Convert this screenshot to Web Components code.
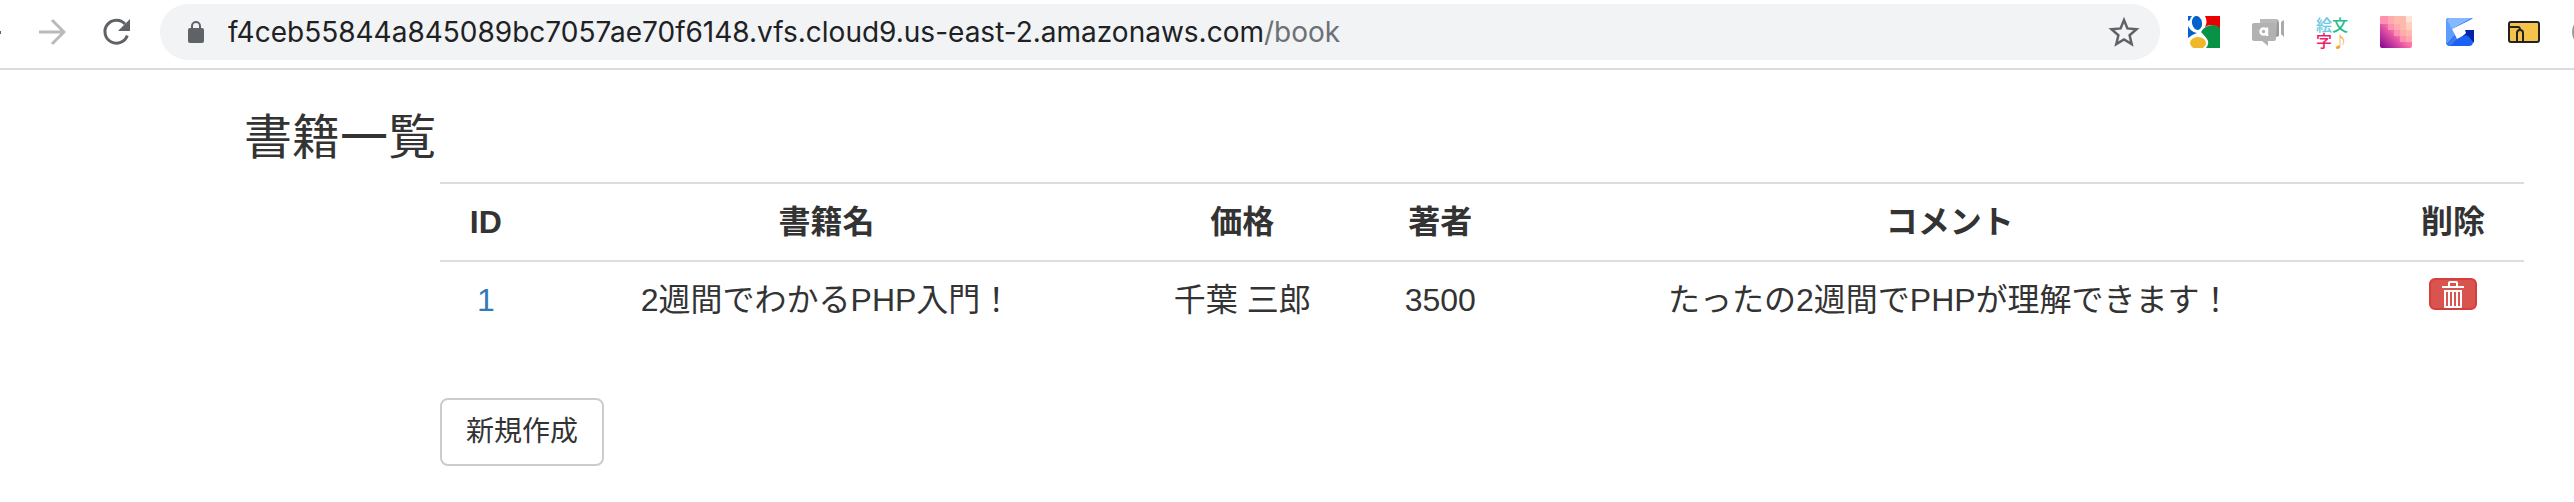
<!DOCTYPE html>
<html lang="ja">
<head>
<meta charset="utf-8">
<title>書籍一覧</title>
<style>
body { margin: 0; background: #fff; color: #333; font-family: "Liberation Sans", "Noto Sans CJK JP", sans-serif; font-size: 32px; line-height: 44px; }
</style>
</head>
<body>
<browser-bar>
  <address-field slot="address">f4ceb55844a845089bc7057ae70f6148.vfs.cloud9.us-east-2.amazonaws.com<span slot="path">/book</span></address-field>
  <extension-list slot="extensions"></extension-list>
</browser-bar>
<book-page>
  <span slot="title">書籍一覧</span>
  <book-table></book-table>
  <create-button slot="action">新規作成</create-button>
</book-page>

<script>
function define(name, html) {
  const template = document.createElement('template');
  template.innerHTML = html;
  customElements.define(name, class extends HTMLElement {
    constructor() {
      super();
      this.attachShadow({ mode: 'open' }).append(template.content.cloneNode(true));
    }
  });
}

define('browser-bar', `
<style>
:host { display: block; border-bottom: 2px solid #dadce0; background: #fff; overflow: hidden; }
header { display: flex; align-items: center; padding: 4px 0 8px; }
nav { display: flex; flex: none; align-items: center; width: 160px; }
button { display: block; margin: 0; padding: 0; border: 0; background: none; width: 64px; height: 56px; flex: none; }
button.back { width: 20px; }
svg { display: block; margin: auto; }
.back svg { margin: 0; }
slot[name=address] { display: block; flex: 1; min-width: 0; }
</style>
<header>
  <nav>
    <button class="back" aria-label="戻る"><svg width="2" height="4"><rect y="1" width="1" height="3" fill="#5f6368"/></svg></button>
    <button aria-label="進む"><svg width="28" height="28" viewBox="0 0 28 28" fill="none" stroke="#bababa" stroke-width="3"><path d="M1 14H26M14 2l12 12-12 12"/></svg></button>
    <button aria-label="再読み込み"><svg width="28" height="28" viewBox="0 0 28 28"><path d="M23 6A11.5 11.5 0 1 0 25.300 17.500" fill="none" stroke="#5f6368" stroke-width="3"/><path d="M28 1v12H16z" fill="#5f6368"/></svg></button>
  </nav>
  <slot name="address"></slot>
  <slot name="extensions"></slot>
</header>`);

define('address-field', `
<style>
:host { display: flex; flex: 1; min-width: 0; align-items: center; box-sizing: border-box; height: 56px; padding: 0 20px 0 28px; border-radius: 28px; background: #f1f3f4; color: #202124; font: 28px/40px Inter, sans-serif; }
svg { display: block; flex: none; }
.url { flex: 1; min-width: 0; margin-left: 24px; white-space: nowrap; overflow: hidden; outline: 0; }
.path { color: #6d7074; }
button { margin: 0; padding: 0; border: 0; background: none; }
</style>
<svg width="16" height="22" viewBox="0 0 16 22"><path d="M4 9V5a4 4 0 0 1 8 0v4" fill="none" stroke="#5f6368" stroke-width="2"/><rect y="7" width="16" height="15" rx="2" fill="#5f6368"/></svg>
<div class="url" role="textbox" aria-label="アドレス"><slot></slot><span class="path"><slot name="path"></slot></span></div>
<button aria-label="ブックマーク"><svg width="32" height="32" viewBox="0 0 32 32" fill="none" stroke="#5f6368" stroke-width="2.500"><path d="M16 4l3.400 8.400 9.100.8-6.900 6 2.100 8.900-7.700-4.700-7.700 4.700 2.100-8.900-6.900-6 9.100-.8z"/></svg></button>`);

define('extension-list', `
<style>
:host { display: flex; flex: none; align-items: center; gap: 32px; width: 386px; height: 56px; margin-left: 28px; overflow: hidden; }
button { display: block; flex: none; margin: 0; padding: 0; border: 0; background: none; width: 32px; height: 32px; }
svg { display: block; }
.emoji { display: grid; grid-template-columns: 16px 16px; font: 500 16px/16px "Noto Sans CJK JP", sans-serif; }
</style>
<button aria-label="Google"><svg width="32" height="32" viewBox="0 0 32 32"><path fill="#fff" d="M0 0h32v32H0z"/><path fill="#0460ca" d="M0 0h4Q2 2 2 4L0 5zM0 10q3 6 9 7-4 1-9 5z"/><path fill="#ea0000" d="M17 0h15v13Q24 6 17 11q3-5 0-11z"/><path fill="#079246" d="M13 16Q17 9 25 9q4 0 7 3v20H18q4-5 1-9-2-3-6-7z"/><ellipse cx="9" cy="7" rx="5" ry="7" transform="rotate(-10 9 7)" fill="#0460ca"/><ellipse cx="10" cy="27" rx="8" ry="6" fill="#f1b72a"/></svg></button>
<button aria-label="ビデオ"><svg width="32" height="32" viewBox="0 0 32 32"><path fill="#b9b9b9" d="M8 3h16q3 0 3 3v14H8z"/><path fill="#999" d="M25 5q2 1 2 3v10q0 3-3 3z"/><path fill="#aaa" d="M29 6l3-2v17l-3-3z"/><path fill="#b2b2b2" d="M2 7h20q2 0 2 2v14q0 2-2 2h-6v5l-6-5H2q-2 0-2-2V9q0-2 2-2z"/><circle cx="11.500" cy="15.500" r="3" fill="none" stroke="#fff" stroke-width="2.500"/><path d="M15 11.500V20" stroke="#fff" stroke-width="2.500"/></svg></button>
<button class="emoji" aria-label="絵文字"><span style="color:#68c9df">絵</span><span style="color:#24bb8d">文</span><span style="color:#f01c6b">字</span><span style="color:#f3a532">♪</span></button>
<button aria-label="カラー"><svg width="32" height="32" viewBox="0 0 32 32"><defs><linearGradient id="p" x1="0" y1="1" x2="1" y2="0"><stop stop-color="#850093"/><stop offset=".5" stop-color="#ff70a8"/><stop offset="1" stop-color="#ffb8a5"/></linearGradient><clipPath id="c"><rect width="32" height="32" rx="2"/></clipPath></defs><g clip-path="url(#c)"><path fill="url(#p)" d="M0 0h32v32H0z"/><path fill="#ff91b0" d="M0 0h8v8H0zM8 8h6v6H8zM14 14h6v6h-6zM20 20h6v6h-6z"/><path fill="#ffabad" d="M8 0h6v8H8zM14 8h6v6h-6zM20 14h6v6h-6zM26 20h6v6h-6z"/><path fill="#ffbab0" d="M14 0h12v8H14zM20 8h6v6h-6zM26 14h6v6h-6z"/><path fill="#ffd0bf" d="M26 6h6v8h-6z"/><path fill="#ffe4d8" d="M26 0h6v6h-6z"/></g></svg></button>
<button aria-label="翻訳"><svg width="32" height="32" viewBox="0 0 32 32"><path fill="#1b61f5" d="M5 2h24L18 12l11 3v11q0 4-4 4H6q-4 0-4-4V5q0-3 3-3z"/><path fill="#5c9dff" d="M5 2h24L8 12l3 7-8 9-1-2V5q0-3 3-3z"/><path fill="#3d7df0" d="M4 28l7-8 2 3-7 7q-1 0-2-2z"/><path fill="#86b8ff" d="M5 2h22L8 13 3 4z"/><path fill="#fff" d="M30 2L8 13l5 10 9-5 4 3V14h5V2z"/><path fill="#0424a8" d="M21 14h9v13l-5-6-3-2-4 2 4-4z"/></svg></button>
<button aria-label="フォルダ"><svg width="32" height="32" viewBox="0 0 32 32"><rect x="1" y="6" width="30" height="20" rx="2" fill="#f5c34b" stroke="#222" stroke-width="2"/><path d="M1 11h9q2 0 2 3M9 26V17q0-3 3-3t3 3v9" fill="none" stroke="#222" stroke-width="2"/></svg></button>
<button aria-label="プロフィール"><svg width="32" height="32"><circle cx="16" cy="16" r="16" fill="#999"/></svg></button>`);

define('book-page', `
<style>
:host { display: block; padding: 36px 50px 36px 244px; }
h1 { margin: 0 0 12px; font-size: 48px; line-height: 64px; font-weight: 400; }
main { padding-left: 196px; }
slot[name=action] { display: block; margin-top: 60px; }
</style>
<h1><slot name="title"></slot></h1>
<main><slot></slot><slot name="action"></slot></main>`);

define('book-table', `
<style>
:host { display: block; }
table { width: 100%; table-layout: fixed; border-collapse: separate; border-spacing: 0; }
th, td { padding: 16px 0; border-top: 2px solid #ddd; text-align: center; vertical-align: top; white-space: nowrap; height: 44px; }
a { color: #337ab7; text-decoration: none; }
.id { width: 4.4%; } .name { width: 28.3%; } .price { width: 11.6%; } .author { width: 7.4%; } .note { width: 41.5%; }
</style>
<table>
  <colgroup><col class="id"><col class="name"><col class="price"><col class="author"><col class="note"><col></colgroup>
  <thead><tr><th>ID</th><th>書籍名</th><th>価格</th><th>著者</th><th>コメント</th><th>削除</th></tr></thead>
  <tbody><tr><td><a href="#book-1">1</a></td><td>2週間でわかるPHP入門！</td><td>千葉 三郎</td><td>3500</td><td>たったの2週間でPHPが理解できます！</td><td><delete-button></delete-button></td></tr></tbody>
</table>`);

define('delete-button', `
<style>
:host { display: block; }
button { display: block; box-sizing: border-box; width: 48px; height: 32px; margin: 0 auto; padding: 0; border: 2px solid #d43f3a; border-radius: 6px; background: #d9534f; }
svg { display: block; margin: 0 auto; }
</style>
<button aria-label="削除"><svg width="22" height="28" viewBox="0 0 22 28"><path d="M7 6V3q0-1 1-1h6q1 0 1 1v3" fill="none" stroke="#fff" stroke-width="2"/><path fill="#fff" d="M0 6h22v2H0zM2 10h18v17q0 1-1 1H3q-1 0-1-1z"/><path fill="#d9534f" d="M4 12h2v14H4zM8 12h2v14H8zM12 12h2v14h-2zM16 12h2v14h-2z"/></svg></button>`);

define('create-button', `
<style>
:host { display: block; }
button { display: block; margin: 0; padding: 12px 24px; border: 2px solid #ccc; border-radius: 8px; background: #fff; color: #333; font: inherit; font-size: 28px; line-height: 40px; }
</style>
<button><slot></slot></button>`);
</script>
</body>
</html>
